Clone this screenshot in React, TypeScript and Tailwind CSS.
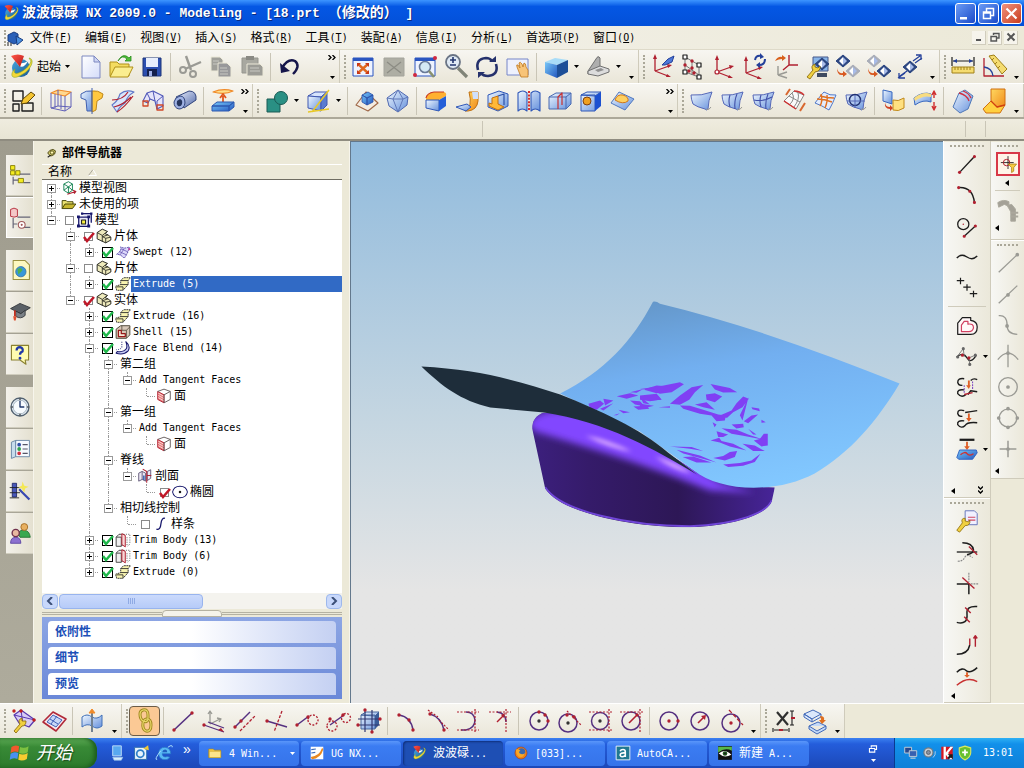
import React from "react";

type Shape = [d: string, stroke?: string, fill?: string, width?: number, dash?: string];

const c = (x: number, y: number, r: number) =>
  `M${x - r} ${y}a${r} ${r} 0 1 0 ${2 * r} 0a${r} ${r} 0 1 0 ${-2 * r} 0Z`;
const N = "none";
const K = "#1c1c1c";
const R = "#b02030";
const B = "#3b54a8";
const V = "#553080";
const G = "#9a9a94";
const W = "#ffffff";
const O = "#f08a28";
const Y = "#f0d040";

const dot = (x: number, y: number, col = R, r = 1.7): Shape => [c(x, y, r), N, col];
const axes = (x: number, y: number, col = R): Shape[] => [
  [`M${x} ${y}V${y - 13}M${x} ${y}L${x + 14} ${y - 5}M${x} ${y}L${x + 13} ${y + 5}`, col, N, 1.3],
  [`M${x - 2} ${y - 12}L${x} ${y - 17}L${x + 2} ${y - 12}ZM${x + 12} ${y - 7}L${x + 17} ${y - 6}L${x + 13} ${y - 3}ZM${x + 12} ${y + 3}L${x + 16} ${y + 6}L${x + 11} ${y + 6}Z`, N, col],
];
const diamond = (x: number, y: number, col = "#2b4580"): Shape[] => [
  [`M${x} ${y - 6}L${x + 7} ${y}L${x} ${y + 6}L${x - 7} ${y}Z`, col, col, 1],
  [`M${x - 4} ${y}L${x} ${y - 4}V${y + 4}Z`, N, W],
  [`M${x + 4} ${y}L${x} ${y - 4}V${y + 4}Z`, N, "#a9bce8"],
];
const windowFrame = (col = "#2a55c0"): Shape[] => [
  ["M4 5H24V23H4Z", col, "#eef3ff", 1],
  ["M4 5H24V8H4Z", N, col],
];
const surface = (fill = "url(#paleBlue)"): Shape[] => [
  ["M4 8Q14 9 25 5Q21 14 21 22Q20 24 18 22Q10 20 6 17Q4 12 4 8Z", "#5568b8", fill, 1],
  ["M19 22Q22 24 24 20", "#9a9a94", N, 1],
];
const roundBox = "M4 8L15 4L24 7V19L14 24L4 20Z";

const icons: Record<string, Shape[]> = {
  nx: [
    [c(14, 15, 9), N, "url(#globe)"],
    ["M9 9Q15 19 21 8Q15 12 9 9Z", N, W],
    ["M4 3Q11 0 17 3L13 14Z", N, "url(#redCone)"],
    ["M22 5C29 6 24 19 10 24C3 26 4 19 8 16C4 26 22 17 24 8Z", "#8aa820", "#f4d838", 0.6],
  ],
  newDoc: [["M6 3H18L24 9V25H6Z", "#7c88c0", "url(#paper)", 1], ["M18 3V9H24Z", "#7c88c0", "#cdd4f4", 1]],
  open: [
    ["M3 9H10L12 11H22V23H3Z", "#b09018", "#f4dc60", 1],
    ["M3 24L8 14H26L21 24Z", "#b09018", "#fbee90", 1],
    ["M11 8Q15 1 20 6L18 8H24V3L22 5Q16 -1 11 8Z", "#2a8a20", "#50c038", 0.8],
  ],
  save: [
    ["M5 5H23V23H5Z", "#1d3478", "#2c4fb0", 1],
    ["M8 5H20V14H8Z", N, "#e8eefc"],
    ["M9 16H19V23H9Z", N, "#14204c"],
    ["M11 18H14V23H11Z", N, "#9fb0e8"],
  ],
  cut: [
    ["M10 3L15 17M25 9L9 16", G, N, 2.4],
    [c(7, 17, 3), G, N, 2],
    [c(17, 21, 3), G, N, 2],
  ],
  copy: [
    ["M4 4H13L16 7V18H4Z", "#ece9d8", "#a0a09a", 1],
    ["M11 10H20L24 14V24H11Z", "#ece9d8", "#98989a", 1],
    ["M6 8H12M6 11H10M13 15H20M13 18H21M13 21H21", "#c8c8c2", N, 1],
  ],
  paste: [
    ["M4 5H20V20H4Z", "#95958e", "#a8a8a0", 1],
    ["M8 3H16V7H8Z", N, "#8a8a84"],
    ["M9 11H22L25 14V23H9Z", "#ece9d8", "#9c9c96", 1],
    ["M12 15H21M12 18H22", "#c8c8c2", N, 1],
  ],
  undo: [
    ["M6 15Q12 5 19 8Q25 13 17 21", "#16164a", N, 2.4],
    ["M4 10L5 20L14 18Z", N, "#16164a"],
  ],
  fit: [
    ...windowFrame(),
    ["M9 11L19 20M19 11L9 20", "#e06820", N, 2.4],
    ["M8 10H12L8 14ZM20 10H16L20 14ZM8 21H12L8 17ZM20 21H16L20 17Z", N, "#c83818"],
  ],
  fitGray: [["M4 5H24V23H4Z", "#a4a49c", "#aeaea4", 1], ["M7 9L21 20M21 9L7 20", "#8c8c84", N, 1.3]],
  zoomWin: [
    ...windowFrame(),
    [c(14, 14, 5.5), "#6a7a98", "#d4e8f4", 1.6],
    ["M18 18L23 24", "#889070", N, 2.6],
    dot(4, 22, "#d02840", 2),
    dot(24, 5, "#d02840", 2),
  ],
  zoom: [
    [c(11, 9, 7), "#6a7484", "#dfe9f4", 1.8],
    ["M16 15L25 24", "#808478", N, 3.2],
    ["M11 4V10M8 7H14M8 12H14", "#23366e", N, 1.6],
  ],
  rotate: [
    ["M5 17Q2 6 13 5Q17 5 19 8M23 11Q26 22 15 23Q10 23 8 20", "#25316c", N, 2.6],
    ["M16 9H23V3ZM12 19H5V25Z", N, "#25316c"],
  ],
  pan: [
    ["M3 6H24V22H3Z", "#7786c8", "#eef1fd", 1],
    ["M13 14Q12 11 14 12L16 15L15 10Q16 8 18 11L19 14L20 10Q22 10 22 14L24 17V24H17Z", "#c07820", "#f8c478", 0.8],
  ],
  cube: [
    ["M3 9L13 5L26 7L15 12Z", N, "#a8dcf8"],
    ["M3 9L15 12V25L3 20Z", N, "url(#blue)"],
    ["M15 12L26 7V19L15 25Z", N, "#1d4f98"],
  ],
  clip: [
    ["M4 18L12 6Q14 2 16 5V14L4 21Z", "#707070", "#aeaeae", 1],
    ["M4 18L16 13L25 16V19L14 23L4 21Z", "#707070", "#dcdcdc", 1],
    ["M11 17L17 15L20 17L14 19Z", N, "#909090"],
  ],
  csysPick: [...axes(7, 18), ["M14 12L20 6L26 3L24 9L17 12Z", "#24409a", "#4d78d8", 1]],
  csysGrid: [
    ["M6 4V19M6 4L20 12M6 12L20 22M6 19L20 24M13 8V22M20 12V24", "#777", N, 1],
    ["M4 2H8V6H4ZM18 10H22V14H18ZM4 17H8V21H4ZM18 22H22V26H18Z", K, W, 1.2],
    dot(6, 12), dot(13, 8), dot(13, 15), dot(15, 20), dot(10, 18),
  ],
  csys: [...axes(7, 19), [c(7, 19, 2), R, W, 1.2]],
  csysRot: [
    ...axes(5, 20),
    ["M14 7Q15 2 20 3M24 6Q24 12 18 12", "#24409a", N, 2],
    ["M19 0V6L23 4ZM19 9V15L15 12Z", N, "#24409a"],
  ],
  csysMove: [
    ["M6 22V13M6 22L15 19M6 22L15 25", G, N, 1.4],
    ["M17 12V2M17 12H26M17 12L11 17", R, N, 1.4],
    ["M3 8Q6 3 10 4V2L14 5L10 8V6Q7 6 3 8Z", N, "#d8601c"],
  ],
  csysTool: [
    ["M10 4H25V18H10Z", "#46588a", "#88b4e8", 1],
    ["M14 20H24V24H14Z", N, "#3e4a60"],
    ...diamond(19, 11),
    ["M4 24L10 17Q7 13 12 11V14L15 15L17 13Q18 18 12 19L7 26Z", "#907010", Y, 0.9],
  ],
  swapA: [...diamond(9, 8), ...diamond(19, 18, "#a9adb8"), ["M3 15Q4 21 9 20V18L13 21L9 24V22Q3 23 3 15Z", N, "#d85820"]],
  swapB: [...diamond(9, 8, "#a9adb8"), ...diamond(19, 18), ["M3 15Q4 21 9 20V18L13 21L9 24V22Q3 23 3 15Z", N, "#d85820"]],
  spread: [
    ...diamond(14, 14),
    ["M17 8L24 3M19 10L26 5M20 2H25V7M4 23L11 18M2 25L9 20M3 20V25H9", "#24409a", N, 1.3],
  ],
  measure: [
    ["M3 4V13M25 4V13M4 8H24", K, N, 1.2],
    ["M4 8L8 6V10ZM24 8L20 6V10Z", N, "#24409a"],
    ["M3 14H25V20H3Z", "#a08018", "#f5dc70", 1],
    ["M6 14V17M9 14V17M12 14V17M15 14V17M18 14V17M21 14V17", "#a08018", N, 1],
  ],
  angle: [
    ["M4 5V23H24", R, N, 1.3],
    ["M4 14Q12 15 13 23", "#24409a", N, 1.3],
    ["M9 3L14 2L27 16L22 21Z", "#a08018", "#f5dc70", 1],
    ["M12 7L14 5M15 11L17 9M18 15L20 13", "#a08018", N, 1],
  ],
  sketch: [
    ["M4 4H14V14H4ZM4 17H10V24H4ZM13 16H24V24H13Z", K, N, 1.4],
    ["M12 17L14 12L22 5L26 8L18 16Z", "#604808", "#f4c430", 1],
  ],
  extrude: [
    ["M4 6L11 3L24 5L18 9Z", O, "#ffd890", 1.2],
    ["M4 6V21L18 24V9M18 24L24 20V5M11 3V19L4 21M11 19L24 20M8 7V21M14 8V22", "#6060b8", N, 1],
  ],
  revolve: [
    ["M3 7Q8 3 14 4V24H9L8 13L3 11Z", "#4060b0", "url(#paleBlue)", 1],
    ["M14 4Q20 3 25 7L24 11L19 14L18 23L14 25Z", "#c08818", "#ffc840", 1],
    ["M14 1V27", "#4060b0", N, 1],
  ],
  sweep: [
    ["M3 18Q9 14 11 7Q17 2 25 5Q18 9 16 16Q10 20 8 25Z", "#6078c8", "#d8e6fb", 1.1],
    ["M3 13Q14 13 19 5M8 25Q16 20 24 9M5 20Q14 18 22 10", R, N, 1.2],
  ],
  bent: [
    ["M3 14L7 6L13 4L23 9V19L17 22L15 14L10 12L8 16Z", "#5058b8", "#e6e4fa", 1.1],
    ["M7 6L10 12M13 4L15 14M23 9L17 14V22", "#5058b8", N, 1],
    ["M3 14H8V19H3ZM17 18H23V23H17Z", "#d04828", N, 1.3],
  ],
  tube: [
    ["M5 10L18 4Q26 4 25 13L13 21Z", "#31447c", "url(#steel)", 1],
    ["M9 9Q14 9 14 16Q13 22 8 22Q3 21 3 15Q4 10 9 9Z", "#31447c", "#9fb2e4", 1],
    ["M9 12Q12 13 11 17Q10 20 7 19Q5 17 6 14Z", N, "#26365f"],
  ],
  emboss: [
    ["M4 5Q14 1 24 4Q16 8 4 5Z", O, "#ffe08a", 1.2],
    ["M14 16V9M11 11L14 7L17 11", "#e05820", N, 1.8],
    ["M3 19L8 15H25L20 19ZM3 19H20V24H3ZM20 19L25 15V20L20 24Z", "#2c58b0", "url(#blue)", 1],
  ],
  unite: [["M5 12H18V25H5Z", "#1a5a54", "#2a9084", 1], [c(19, 11, 6.5), "#1a5a54", "#2a9084", 1]],
  cubeLines: [
    ["M4 9L11 5H23L17 10Z", "#4058b0", "#d6e4fc", 1],
    ["M4 9L17 10V24L4 21Z", "#4058b0", "url(#paleBlue)", 1],
    ["M17 10L23 5V18L17 24Z", "#4058b0", "#5a7cd0", 1],
    ["M25 3L8 25M4 25L25 22", "#e8c828", N, 1.5],
  ],
  pyramid: [
    ["M3 18L13 5L25 16L15 24Z", "#a06848", "#f4ece0", 1.2],
    ["M9 8L15 5L20 8L14 11ZM9 8V15L14 18V11ZM14 11L20 8V15L14 18Z", "#2c50a8", "url(#blue)", 0.8],
  ],
  poly: [
    ["M14 3L24 10L23 18L14 25L5 19L3 11Z", "#5068b0", "url(#paleBlue)", 1],
    ["M14 3L9 12L14 25M14 3L19 12L14 25M3 11L9 12H19L24 10", "#6078b8", N, 1],
  ],
  blend: [
    ["M4 11Q5 6 12 5H21Q25 5 24 9L17 13H4Z", N, "#ffb030"],
    ["M4 13H17V24L4 21Z", "#3058b8", "url(#paleBlue)", 1],
    ["M17 13L24 9V19L17 24Z", N, "#2560d8"],
    ["M4 11Q5 6 12 5H22", "#c83820", N, 1.2],
  ],
  faceBlend: [
    ["M16 5H25V14Q24 23 15 24H12Q20 20 16 5Z", "#c07010", "url(#orange)", 1],
    ["M3 20L14 17L18 20L13 24Z", "#3058b8", "url(#paleBlue)", 1],
    ["M19 5H25V12H20Z", N, "#cfe0fc"],
  ],
  shell: [
    [roundBox, "#3058b8", "url(#paleBlue)", 1],
    ["M8 11L14 9V17L20 20L14 23L5 19V16L8 17Z", "#c07010", "#ffb838", 1],
    ["M14 9L20 7V18", "#2c50a8", N, 1.2],
  ],
  thread: [
    ["M3 6Q8 2 12 6V24Q7 20 3 24ZM16 6Q20 2 25 6V24Q20 20 16 24Z", "#3058b8", "url(#paleBlue)", 1.1],
    ["M14 4V24", "#d83030", N, 2, "2 1.4"],
  ],
  split: [
    ["M3 10L10 6H25V17L20 22H3Z", "#4868b0", "url(#paleBlue)", 1],
    ["M3 10H20L25 6M20 10V22", "#4868b0", N, 1],
    ["M12 22V10L16 6V18", "#c83030", N, 1.2],
  ],
  hole: [
    ["M4 8L10 5H24L18 9ZM4 8H18V24H4Z", "#3058b8", "url(#paleBlue)", 1],
    ["M18 9L24 5V19L18 24Z", N, "#1c50d0"],
    [c(10, 14, 4), "#804010", "#f0a020", 1],
  ],
  pad: [
    ["M3 16L11 5L26 12L17 23Z", "#5078c0", "url(#paleBlue)", 1],
    ["M7 13Q9 7 15 8Q21 10 20 14Q15 18 7 13Z", "#d07818", "#ffd060", 1],
  ],
  surf0: surface(),
  surf1: [...surface(), ["M12 8Q10 14 12 20M19 7Q16 14 17 22", "#4050a8", N, 1.1]],
  surf2: [...surface(), ["M12 8Q10 14 12 20M19 7Q16 14 17 22M5 13Q14 15 23 10", "#4050a8", N, 1.1]],
  surfCurves: [
    ["M4 14L14 4L24 8L16 22Z", "#888", "#fafafa", 1],
    ["M9 9L20 15M12 6Q16 12 9 18M18 6Q20 12 14 20", "#888", N, 1],
    ["M4 14Q10 18 16 22M14 4Q20 4 24 8", "#d03030", N, 1.5],
    ["M6 8L10 2M20 24L25 16", "#d86830", N, 2],
  ],
  surfGrid: [
    ["M4 16Q10 8 13 5Q19 9 25 8Q22 16 18 23Q10 18 4 16Z", "#5078c8", "#e4ecfc", 1],
    ["M6 12Q14 12 21 15M9 9Q16 11 23 11M10 7Q12 14 9 19M16 8Q17 14 14 21", "#e07020", N, 1.4],
  ],
  surfTrim: [...surface(), [c(13, 13, 5.5), "#203070", N, 1.4], ["M5 14H23M13 8V21", "#5568b8", N, 1]],
  extend: [
    ["M3 3L12 5V17L3 14Z", "#3868c0", "url(#paleBlue)", 1],
    ["M13 13Q18 15 24 11V21Q18 25 13 23Z", "#c08818", "#ffe080", 1],
    ["M5 15Q5 20 10 20V18L13 21L10 24V22Q4 22 5 15Z", N, "#d04020"],
  ],
  offsetSurf: [
    ["M3 11Q12 4 20 7V15Q12 12 4 18Z", "#3868c0", "url(#paleBlue)", 1],
    ["M3 11Q12 4 20 7V10Q12 8 4 14Z", N, "#f8dc80"],
    ["M23 5V11M21 8L23 4L25 8M23 15V22M21 19L23 23L25 19", "#d03030", N, 1.4],
  ],
  thicken: [
    ["M4 20L10 6L16 3L24 9L19 22L11 26Z", "#5078b8", "url(#paleBlue)", 1],
    ["M10 6Q18 8 20 14M14 4Q20 6 22 11", "#d03040", N, 1.3],
  ],
  corner: [
    ["M11 2H25V18L17 22L11 14Z", "#d07010", "url(#orange)", 1],
    ["M3 22L11 14L17 20L25 18L20 26H6Z", "#d07010", "#ffd040", 1],
    ["M11 14L17 20L25 18", "#d04010", N, 1.3],
  ],
  // curve toolbar
  netTool: [
    ["M5 8L12 3L26 13L20 20L10 16Z", "#5838b0", "#d8ccf4", 1.2],
    ["M12 3L14 18M5 8L26 13", "#5838b0", N, 1],
    dot(5, 4, "#c02020"), dot(25, 13, "#c02020"), dot(12, 4, "#c02020"),
    ["M5 24L11 17Q8 13 13 11V14L17 14Q17 19 13 19L7 26Z", "#907010", Y, 0.9],
  ],
  netSurf: [
    ["M3 15L13 5L26 12L16 24Z", "#b02838", "#f8e8ec", 1.6],
    ["M7 15L13 8L22 13L16 20Z", "#4060b8", "#c8d8f8", 1],
    ["M10 12L18 17M17 9L11 17", "#4060b8", N, 1],
  ],
  sheetAxis: [
    ["M4 10Q9 6 14 10Q19 13 24 8V19Q19 23 14 19Q9 16 4 20Z", "#4070b8", "url(#paleBlue)", 1],
    ["M14 5V25", "#708090", N, 2],
    ["M11 6L14 2L17 6Z", O, O, 1],
  ],
  chain: [
    ["M12 3Q17 2 17 8V12Q16 16 12 14Q9 12 9 7Q9 4 12 3Z", "#a08820", N, 3],
    ["M16 12Q20 12 20 18Q20 25 15 24Q11 22 12 16Q13 12 16 12Z", "#a08820", N, 3],
    ["M12 3Q17 2 17 8V12Q16 16 12 14Q9 12 9 7Q9 4 12 3ZM16 12Q20 12 20 18Q20 25 15 24Q11 22 12 16Q13 12 16 12Z", "#e8d868", N, 1.2],
  ],
  line: [["M5 23L23 6", V, N, 1.6], dot(5, 23), dot(23, 6)],
  lineAxes: [
    ["M10 17V5M10 17L20 12M8 7L10 4L12 7M17 11L21 12L19 15", G, N, 1.3],
    ["M4 18L24 25M8 15L24 21", V, N, 1.3],
    dot(4, 18), ["M18 23L24 25L21 21Z", N, R],
  ],
  parallel: [["M4 20L19 5", V, N, 1.5], ["M9 24L24 9", R, N, 1.3, "3 1.5"], dot(4, 20), dot(10, 14)],
  cross: [["M5 14L25 20", V, N, 1.4], ["M20 4L12 25", R, N, 1.3, "3 1.5"], dot(5, 14)],
  tangent: [["M4 18L16 9", V, N, 1.5], [c(20, 13, 5), R, N, 1.3, "2 1.5"], dot(4, 18), dot(15, 10)],
  tangent2: [["M6 18L20 8", V, N, 1.5], [c(8, 19, 5), R, N, 1.3, "2 1.5"], [c(22, 11, 4.5), R, N, 1.3, "2 1.5"], dot(6, 12), dot(19, 8)],
  frame: [
    ["M6 8L11 5H24L20 9ZM6 8H20V22H6Z", "#4868a0", "url(#paleBlue)", 1],
    ["M20 9L24 5V18L20 22Z", N, "#3a5c98"],
    ["M10 3V25M17 3V25M3 12H25M3 18H25", "#303870", N, 1.2],
    dot(3, 18), dot(25, 12), dot(10, 3), dot(17, 25),
  ],
  arc3: [["M6 8Q18 10 20 23", V, N, 1.5], dot(6, 8), dot(16, 13), dot(20, 23)],
  arcTan: [["M6 7Q17 10 20 23", V, N, 1.5], ["M4 3L14 10M15 13L25 23", R, N, 1.2, "2 1.5"], dot(6, 7), dot(20, 23)],
  arcLines: [["M6 23H11Q20 21 20 13Q19 5 11 5", V, N, 1.5], ["M2 5H24M2 23H24M20 2V26", R, N, 1.2, "2 1.5"]],
  arcRad: [["M11 5Q20 6 20 15", V, N, 1.5], ["M3 5H25M20 2V26", R, N, 1.2, "2 1.5"], ["M11 15L18 8", R, N, 1.5], ["M15 8L19 6L18 11Z", N, R]],
  circ3: [[c(15, 14, 9), V, N, 1.5], dot(15, 14, "#333"), dot(15, 5), dot(21, 8), dot(24, 14)],
  circTan: [[c(13, 16, 9), V, N, 1.5], dot(13, 16, "#333"), dot(12, 8), dot(19, 10), ["M12 4L26 18", R, N, 1.2, "2 1.5"]],
  circLines: [[c(14, 14, 8.5), V, N, 1.5], dot(14, 14, "#333"), ["M3 5H26M3 23H26M23 2V26", R, N, 1.2, "2 1.5"]],
  circRad: [[c(14, 14, 9), V, N, 1.5], ["M3 5H26M23 2V26", R, N, 1.2, "2 1.5"], ["M12 16L19 9", R, N, 1.6], dot(20, 8)],
  circCenter: [[c(14, 14, 9), V, N, 1.5], dot(14, 14), dot(23, 14)],
  circArrow: [[c(14, 14, 9), V, N, 1.5], ["M12 16L18 10", R, N, 1.6], ["M15 9L20 8L19 13Z", N, R]],
  circTanC: [[c(14, 16, 9), V, N, 1.5], dot(14, 16), ["M12 3L26 18", R, N, 1.3, "4 2"]],
  dimension: [
    ["M7 5L18 18M18 5L7 18", "#303030", N, 2.2],
    ["M22 4V18M20 4H24M20 18H24M3 21V25M19 21V25M4 23H18", K, N, 1.1],
    ["M9 23H13M21 11H25", R, N, 1.8],
  ],
  blocks: [
    ["M3 7L12 3L20 7L11 12ZM3 7V10L11 15V12ZM11 15L20 10V7", "#4068b8", "#dbe8fb", 1],
    ["M8 19L17 15L25 19L16 24ZM8 19V22L16 27L25 22V19", "#4068b8", "#c4daf8", 1],
    ["M19 9Q24 9 23 13H25L21 17L18 13H20Q20 11 19 9Z", N, "#e07020"],
  ],
  // vertical toolbars
  vLine: [["M6 23L22 6", K, N, 1.5], dot(6, 23), dot(22, 6)],
  vArc: [["M5 6Q20 5 22 22", K, N, 1.5], dot(5, 6), dot(17, 10), dot(22, 22)],
  vCircLine: [[c(10, 12, 6), K, N, 1.4], dot(10, 12, R, 0.8), ["M11 25L23 14", K, N, 1.4], dot(11, 25), dot(23, 14)],
  vWave: [["M3 15Q8 10 14 14Q20 18 25 13", K, N, 1.6]],
  vPoints: [["M7 3V10M3 6H11M14 10V17M10 13H18M21 17V24M17 20H25", K, N, 1.3]],
  vOffset: [
    ["M4 23V11L9 5H18V8Q25 9 25 15Q25 23 18 23Z", K, "#fff8f8", 1.3],
    ["M8 20V13L11 9H15V12Q21 11 21 16Q20 20 16 20Z", "#d04060", N, 1.3],
  ],
  vPoly: [["M3 14Q10 8 14 15T24 12", K, N, 1.4], ["M3 14L10 5L11 14M17 22L16 15L23 12", "#777", N, 1], dot(10, 5, "#666"), dot(4, 14, "#666"), dot(23, 12, "#666"), dot(17, 22, "#666"), dot(9, 12), dot(16, 15)],
  vBridge: [
    ["M11 4Q4 3 4 8Q5 12 9 11M11 16Q3 15 4 20Q8 25 13 21M18 6Q21 3 25 5M15 21L18 17L25 18", K, N, 1.5],
    ["M11 11V20M20 7V16", "#8050c0", N, 1.2, "2 1"],
    ["M15 6V11H13L16 15L18 11H17V6Z", N, "#e06028"],
    ["M11 21L20 19", R, N, 1.5],
  ],
  vProject: [
    ["M11 5Q4 3 4 8Q5 12 9 11M12 7L18 6L25 5M11 16Q3 15 4 20Q8 25 12 21Q14 17 25 18", K, N, 1.5],
    ["M15 8V13H13L16 17L19 13H17V8Z", N, "#e06028"],
  ],
  vSheet: [
    ["M6 3H22", K, N, 2.4],
    ["M13 5V10H11L14 14L17 10H15V5Z", N, "#e06028"],
    ["M3 22L6 14H24L25 17L20 24H5Z", "#3060c0", "url(#blue)", 1],
    ["M7 19Q12 15 14 18T21 18", "#d03030", N, 1.4],
  ],
  vEdit: [
    ["M12 3H22L25 6V18H12Z", "#6070b8", "#f0f0ff", 1],
    ["M15 10H23M15 13H23", "#d04860", N, 1.2],
    ["M3 24L9 16Q7 11 12 11V14L16 15L17 13Q18 19 12 19L6 26Z", "#907010", Y, 0.9],
  ],
  vTrim: [["M9 4Q20 4 21 12Q21 15 14 17", K, N, 1.6], ["M3 14H25", K, N, 1.4], ["M4 24Q10 24 12 19Q15 16 20 20", "#888", N, 1.2, "2 1"], ["M16 8L25 17", R, N, 1.4]],
  vCorner: [["M3 15H16V26", K, N, 1.6], ["M16 3V13M18 15H26", "#888", N, 1.2, "2 1"], ["M9 8L22 20", R, N, 1.4]],
  vDivide: [["M3 23Q15 26 14 14Q13 5 25 6", K, N, 1.6], ["M12 7L18 13M11 17L17 23", R, N, 1.5]],
  vLength: [["M3 24Q15 24 17 14", K, N, 1.6], ["M17 14V7M23 5V16M21 7L23 4L25 7", R, N, 1.5]],
  vSmooth: [["M3 10Q9 4 13 8T25 5", K, N, 1.6], ["M13 10V13H11L14 16L17 13H15V10Z", N, "#e06028"], ["M3 24Q14 14 25 20", "#c83030", N, 1.6]],
  filter: [
    ["M14 3V21M4 12H22", K, N, 1.2],
    [c(12, 12, 4.5), R, N, 1.4],
    ["M14 14H26L22 19V24L19 26V19Z", "#a07810", "#f8cc40", 1],
  ],
  gear: [["M3 6Q9 2 15 5V10L10 8L4 11ZM13 9L18 8L22 13V26H17V16Z", "#aaa79c", "#a4a197", 1], ["M17 17H25M17 21H25", "#aaa79c", N, 2]],
  gLine: [["M4 24L24 5", G, N, 1.4], dot(24, 5, G, 2)],
  gMid: [["M4 24L24 5", G, N, 1.4], dot(14, 15, G, 2)],
  gSpline: [["M4 4Q13 3 13 14Q13 24 24 24", G, N, 1.4], dot(13, 15, G, 2)],
  gInter: [["M3 18Q14 4 25 18M14 2V26", G, N, 1.4], dot(14, 11, G, 2)],
  gCenter: [[c(14, 14, 10), G, N, 1.4], dot(14, 14, G, 2)],
  gQuad: [[c(14, 14, 9.5), G, N, 1.4], dot(14, 4, G, 2), dot(14, 24, G, 2), dot(4, 14, G, 2), dot(24, 14, G, 2)],
  gPlus: [["M14 5V23M5 14H23", G, N, 1.6], dot(14, 14, G, 2)],
  // resource bar
  assembly: [["M3 3H8V8H3ZM3 9H8V14H3ZM9 9H14V14H9ZM12 18H18V23H12Z", "#807800", "#f4ec20", 1], ["M14 13H26M6 16V25M6 20H12M18 23H26", "#667", N, 1.4]],
  part: [["M3 4Q7 1 11 4V12Q7 14 3 12Z", R, "#f4c8c8", 1], ["M11 13H26M6 14V26M6 21H11M18 25H26", "#667", N, 1.4], [c(16, 22, 4), "#a05858", W, 1.2], dot(16, 22, "#a05858", 1.2)],
  web: [["M6 3H20L25 8V25H6Z", "#9a9040", "#fdf8c0", 1.2], [c(15, 16, 6), "#3870a8", "#3898d8", 1], ["M11 13Q15 10 17 14Q14 18 12 19Z", N, "#50b050"]],
  cap: [["M3 10L14 4L26 9L15 16Z", "#303438", "#5a6066", 1], ["M9 13V19Q15 23 20 18V12L15 16Z", "#303438", "#7a8086", 1], ["M8 12V19", "#c83020", N, 2], ["M6 19H10L9 24H7Z", N, "#e05030"]],
  help: [["M4 4H24V21H20L21 26L14 21H4Z", "#8a8030", "#fffcb0", 1.3], ["M10 10Q10 6 14 6Q18 7 17 11Q14 12 14 15", "#2038a8", N, 2.6], dot(14, 19, "#2038a8")],
  clock: [[c(14, 14, 10.5), "#506070", "#dfe8f0", 1.6], [c(14, 14, 8), "#a0b0bc", "#f7fbfe", 1], ["M14 7V14H19", "#20386c", N, 1.6], ["M14 4V6M14 22V24M4 14H6M22 14H24", K, N, 1.2]],
  palette: [["M4 6L9 4V23L4 25Z", "#6080a0", "#c8dcec", 1], ["M9 4H25V23H9Z", "#6080a0", "#f6faff", 1], dot(13, 9, "#3050a8", 2.2), dot(13, 14, "#30a050", 2.2), dot(13, 19, "#d03040", 2.2), ["M17 9H23M17 14H23M17 19H23", "#556", N, 1.4]],
  wizard: [["M5 5H10V21H5Z", "#202868", "#4858b8", 1], ["M2 10H15M2 16H14M2 22H13", K, N, 1], ["M13 12L25 24", "#3848b0", N, 2.6], ["M17 3L19 8L24 9L20 11L19 16L16 11L12 10L16 8Z", N, "#f4e858"]],
  users: [["M12 15Q13 10 19 11Q25 11 26 19H14Z", "#207030", "#38a850", 1], [c(19, 7, 4), "#a06820", "#e8b060", 1], ["M3 26Q3 19 9 19Q15 19 15 26Z", "#5840a0", "#8c70d0", 1], [c(9, 14, 4.2), "#70304c", "#e8b8a0", 1.6]],
  // task bar
  flag: [["M4 7Q8 4 13 6L12 13Q7 11 3 14Z", N, "#f0582c"], ["M14 7Q19 9 24 6L23 13Q18 16 13 14Z", N, "#7cc040"], ["M3 15Q7 12 12 14L11 21Q6 19 2 22Z", N, "#4a90f0"], ["M13 15Q18 17 23 14L22 21Q17 24 12 22Z", N, "#f8cc30"]],
  qDesk: [["M8 4H20V18H8Z", "#b8d8f8", "#58a8f0", 1.4], ["M8 20H22L20 24H10Z", "#9ac4e8", "#d8ecfc", 1]],
  qMail: [["M5 6H18L22 10V23H5Z", "#3070b0", "#e8f4fc", 1.4], [c(13, 15, 5), "#3080c8", N, 2.4], ["M17 8L24 3L25 10Z", N, "#f0c838"]],
  qIe: [["M5 14Q6 6 14 6Q22 7 22 15H10Q11 21 17 19L21 20Q17 25 11 23Q5 21 5 14Z", "#2878c8", "#58b8f4", 1], ["M10 13H17Q17 9 14 9Q11 9 10 13Z", N, "#2060c0"], ["M3 23Q-2 24 8 11M18 6Q25 1 24 6", "#a8dcfc", N, 1.4]],
  folder: [["M3 7H11L13 9H24V22H3Z", "#a88010", "#f4c848", 1], ["M4 11H24V22H4Z", "#c8a020", "#fce48c", 1]],
  ug: [["M3 3H25V25H3Z", N, W], ["M3 21Q18 20 23 5L25 8Q20 24 5 25Z", N, "#e88820"], ["M4 8L12 7M4 14L11 13", "#3868b8", N, 2]],
  firefox: [[c(14, 14, 10.5), "#a03808", "#f08018", 1], [c(15, 12, 6.5), N, "#3868b0"], ["M5 8Q10 6 13 10Q9 12 12 15Q17 18 21 14Q18 23 11 21Q5 18 5 8Z", N, "#f8a828"]],
  acad: [["M2 2H26V26H2Z", W, "#207890", 1.5], ["M9 11Q10 8 14 8Q18 8 18 12V21M18 14Q9 13 9 18Q11 23 18 18", W, N, 2.8]],
  eye: [["M2 2H26V26H2Z", N, "#101010"], ["M2 3H26V10Q14 4 2 13Z", N, "#58b848"], ["M3 15Q13 5 25 17Q13 24 3 15Z", N, W], [c(14, 15, 4), N, "#205820"], dot(14, 15, K)],
  net: [["M3 4H15V14H3Z", "#c8d0d8", "#28488c", 1.6], ["M11 10H24V20H11Z", "#c8d0d8", "#3860b0", 1.6], ["M13 23H22", "#c8d0d8", N, 2]],
  volume: [[c(13, 13, 8), "#707880", "#c8ccd0", 2], [c(13, 13, 3.5), "#505860", "#8890a0", 1.4], ["M21 22Q26 18 25 11", "#b8d0e8", N, 1.6]],
  kav: [["M4 3H24V25H4Z", N, "#d81820"], ["M8 3H12V13L20 3H25L16 14L24 25H18L12 17V25H8Z", N, W], ["M15 16H24V25L21 22L17 25L15 22L18 19Z", N, K]],
  shield: [["M14 2L24 5V14Q23 22 14 26Q5 22 4 14V5Z", "#d8e860", "#68c030", 2], ["M14 8V19M9 13H19", W, N, 3]],
  // tree
  tViews: [["M5 7L13 3L20 7V18L13 23L5 18ZM5 7L13 12L20 7M13 12V23M5 18L13 12M20 18L13 12", "#108050", N, 1.6], ["M11 25L26 20M21 18L26 20L23 24", R, N, 2]],
  tFolder: [["M2 22V8H9L11 10H21V14", "#404000", "#e8e070", 1.6], ["M2 22L7 14H26L20 22Z", "#404000", "#c8b830", 1.6]],
  tModel: [["M3 9H20V25H3ZM9 3H25V19", "#18186c", "#e8e8f8", 2.2], ["M8 14H15V21H8Z", K, "#f8f040", 1.8], ["M0 6H5V11H0ZM18 6H23V11H18ZM0 22H5V27H0ZM18 22H23V27H18ZM7 1H11V5H7ZM23 1H27V5H23Z", N, "#18186c"]],
  tBody: [["M2 8L11 2L20 6L16 10L21 12L26 16V21L17 26L2 19Z", "#282820", "#eeeabc", 1.7], ["M2 8L11 13V24M11 13L20 6M12 15L21 12M17 26V18L26 16M17 18L11 15", "#282820", N, 1.5]],
  tSwept: [["M3 18Q12 12 10 5Q16 9 25 5Q23 16 16 25Q10 18 3 18Z", "#4838a0", "#dcd8fa", 1.6, "3 1.5"], ["M7 13L20 19M10 8L23 14M16 8L9 19", "#6050b0", N, 1.3], dot(25, 9, "#c040a0", 2)],
  tExtrude: [["M10 8L15 3H27L23 8V15L14 25H3L1 18L10 15Z", "#282828", "#f8f4b0", 1.6, "3 1"], ["M10 8H23M10 15H23M3 19H14V25", "#282828", N, 1.5]],
  tShell: [["M2 9L10 3H26V19L20 25H2Z", "#504838", "#d8c8b8", 1.7], ["M6 11H11V17H18V22H6Z", "#981818", "#f8e8d8", 2.2], ["M12 3V11H20V25M20 11L26 5", "#504838", N, 1.4]],
  tBlend: [["M19 3Q22 10 20 15Q15 22 4 20L2 23Q15 27 23 19Q28 11 19 3Z", "#18186c", "#c8ccf4", 1.8], ["M12 3V13Q9 17 2 17", "#18186c", N, 1.5, "2 2"]],
  tFace: [["M3 6L14 12V26L3 20Z", R, "#e87878", 1.6], ["M3 6L14 2L25 6V20L14 26V12L25 6", "#605858", N, 1.6], ["M4 9L13 14M4 13L13 18M4 17L13 22", W, N, 1.2]],
  tSection: [["M3 9L9 6V20L3 23ZM9 6L15 9V23L9 20M18 6L24 3V18L18 22Z", "#605878", "#ece8f4", 1.6], ["M10 2L17 6V26M17 13H25", R, N, 1.8], ["M12 13V21", "#2858b0", N, 2.5]],
  tEllipse: [["M1 14Q3 4 14 4Q25 4 27 14Q25 24 14 24Q3 24 1 14Z", "#18186c", N, 1.8], dot(14, 14, K, 2.2)],
  tSpline: [["M21 4Q15 3 14 13Q13 25 6 23", "#18186c", N, 2.2]],
  tTrim: [["M2 9L7 4H16V20L11 25H2ZM2 9H11V25", "#404040", "#f0f0f0", 1.6], ["M12 3L18 6V26L12 22Z", R, "#f8d8d8", 1.7], ["M19 4H26V21L22 25M21 9V25", "#606060", N, 1.5, "2 2"]],
  pin: [["M4 14L9 8Q17 3 22 9Q22 18 15 20L10 21Z", "#383400", "#d8d070", 2], ["M4 24L11 19", K, N, 2.5], [c(14, 13, 4), "#383400", "#fff8b0", 1.8]],
};

function Icon({ name, className = "size-7" }: { name: string; className?: string }) {
  return (
    <svg viewBox="0 0 28 28" className={`${className} block shrink-0`} aria-hidden="true">
      {icons[name].map(([d, stroke = N, fill = N, width = 1, dash], i) => (
        <path key={i} d={d} stroke={stroke} fill={fill} strokeWidth={width} strokeDasharray={dash} strokeLinejoin="round" />
      ))}
    </svg>
  );
}

const latin = "font-['DejaVu_Sans_Mono','Liberation_Mono',monospace] text-[10px]";

function Mixed({ text }: { text: string }) {
  return (
    <>
      {(text.match(/[\x00-\x7f]+|[^\x00-\x7f]+/g) ?? []).map((part, i) =>
        part.charCodeAt(0) < 128 ? (
          <span key={i} className={`${latin} whitespace-pre`}>{part}</span>
        ) : (
          <span key={i}>{part}</span>
        ),
      )}
    </>
  );
}

function Down() {
  return <svg viewBox="0 0 5 3" className="h-[3px] w-[5px]" aria-hidden="true"><path d="M0 0H5L2.5 3Z" fill="#000" /></svg>;
}
function Left() {
  return <svg viewBox="0 0 4 6" className="h-[6px] w-[4px]" aria-hidden="true"><path d="M4 0V6L0 3Z" fill="#000" /></svg>;
}
function Handle() {
  return <span className="mr-px ml-1 h-6 w-[2px] shrink-0 border-l-2 border-dotted border-[#aaa798]" />;
}
function Sep() {
  return <span className="mx-[3px] h-7 w-px shrink-0 bg-[#c9c5b6]" />;
}
function Drop() {
  return (
    <button type="button" aria-label="More" className="flex h-7 w-[11px] shrink-0 items-center justify-center"><Down /></button>
  );
}
function Options({ more = false }: { more?: boolean }) {
  return (
    <button type="button" aria-label="Toolbar options" className="flex h-8 w-3.5 shrink-0 flex-col items-center justify-between py-1">
      {more ? (
        <svg viewBox="0 0 8 5" className="h-[5px] w-2" aria-hidden="true">
          <path d="M0.500 0L3 2.500L.5 5M4.500 0L7 2.500L4.500 5" stroke="#000" fill="none" strokeWidth="1.300" />
        </svg>
      ) : (
        <span />
      )}
      <Down />
    </button>
  );
}
function Tool({ name }: { name: string }) {
  const active = name === "chain";
  return (
    <button
      type="button"
      aria-label={name}
      aria-pressed={active}
      className={`flex h-[30px] w-[31px] shrink-0 items-center justify-center rounded-sm ${active ? "border border-[#6b5c48] bg-[#fbc995]" : ""}`}
    >
      <Icon name={name} />
    </button>
  );
}

function Group({ items, grow = false, more = false, start = false }: { items: string; grow?: boolean; more?: boolean; start?: boolean }) {
  return (
    <div role="toolbar" className={`flex h-full items-center border-r border-[#cfcbbb] bg-linear-to-b from-[#f7f6f1] to-[#eae6d8] ${grow ? "flex-1" : "shrink-0"}`}>
      <Handle />
      {start && (
        <button type="button" className="flex h-[30px] w-[67px] shrink-0 items-center gap-0.5 text-xs">
          <Icon name="nx" />
          <span className="flex items-center gap-1">起始<Down /></span>
        </button>
      )}
      {items.split(" ").map((n, i) => (n === "|" ? <Sep key={i} /> : n === "v" ? <Drop key={i} /> : <Tool key={i} name={n} />))}
      {grow && <span className="flex-1" />}
      <Options more={more} />
    </div>
  );
}

function TitleBar() {
  const btn = "flex size-[21px] items-center justify-center rounded-[3px] border border-white";
  return (
    <header className="flex h-[26px] shrink-0 items-center bg-linear-to-b from-[#3d95ff] via-[#0457e4] via-25% to-[#0350d8] px-0.5 text-white">
      <Icon name="nx" className="size-[18px]" />
      <h1 className="ml-0.5 flex-1 truncate font-['Liberation_Mono','Noto_Sans_CJK_SC',monospace] text-[13px] font-bold whitespace-pre [text-shadow:1px_1px_0_#0a2a80]">
        <span className="text-sm">波波碌碌</span> NX 2009.0 - Modeling - [18.prt <span className="text-sm">（修改的）</span> ]
      </h1>
      <div className="flex gap-0.5">
        <button type="button" aria-label="Minimize" className={`${btn} bg-linear-to-br from-[#6c9bf4] to-[#1b48c8]`}>
          <svg viewBox="0 0 19 19" className="size-[19px]"><path d="M4 13H11V15.500H4Z" fill="#fff" /></svg>
        </button>
        <button type="button" aria-label="Restore" className={`${btn} bg-linear-to-br from-[#6c9bf4] to-[#1b48c8]`}>
          <svg viewBox="0 0 19 19" className="size-[19px]"><path d="M7.500 8V4.500H14.500V11.500H12M4.500 8H11.500V14.500H4.500Z M4 9H12" stroke="#fff" fill="none" strokeWidth="1.500" /></svg>
        </button>
        <button type="button" aria-label="Close" className={`${btn} bg-linear-to-br from-[#f0917c] to-[#c83a18]`}>
          <svg viewBox="0 0 19 19" className="size-[19px]"><path d="M4.500 4.500L14.500 14.500M14.500 4.500L4.500 14.500" stroke="#fff" strokeWidth="2.200" /></svg>
        </button>
      </div>
    </header>
  );
}

const menus: [string, string][] = [
  ["文件", "F"], ["编辑", "E"], ["视图", "V"], ["插入", "S"], ["格式", "R"], ["工具", "T"],
  ["装配", "A"], ["信息", "I"], ["分析", "L"], ["首选项", "P"], ["窗口", "O"],
];

function MenuBar() {
  const btn = "flex h-3.5 w-3.5 items-center justify-center border-r border-b border-[#d0ccbc] bg-[#f6f4ec]";
  return (
    <nav className="flex h-6 shrink-0 items-center border-b border-[#dedac9] bg-linear-to-r from-[#f6f5f1] to-[#ece9d8] pr-1.5">
      <span className="ml-1 h-4 w-[2px] border-l-2 border-dotted border-[#aaa798]" />
      <svg viewBox="0 0 18 18" className="size-[18px]" aria-hidden="true">
        <path d="M2 6L8 3L12 5V13L8 15L2 12Z" fill="#2a60b8" stroke="#183c80" />
        <path d="M10 7L17 11L11 16Z" fill="#4a90e0" stroke="#183c80" />
        <path d="M2 13V17M5 14V17" stroke="#222" />
      </svg>
      <div className="ml-1.5 flex flex-1 gap-[13px] text-xs">
        {menus.map(([label, key]) => (
          <button key={label} type="button" className="flex shrink-0 items-center whitespace-nowrap">
            {label}
            <span className={latin}>(<u>{key}</u>)</span>
          </button>
        ))}
      </div>
      <div className="flex gap-0.5">
        <button type="button" aria-label="Minimize document" className={btn}><svg viewBox="0 0 10 10" className="size-2.5"><path d="M2 8H7" stroke="#555" strokeWidth="2" /></svg></button>
        <button type="button" aria-label="Restore document" className={btn}><svg viewBox="0 0 10 10" className="size-2.5"><path d="M3.500 3V1.500H9V6H7M1 4.500H6.500V9H1Z" stroke="#555" fill="none" strokeWidth="1.400" /></svg></button>
        <button type="button" aria-label="Close document" className={btn}><svg viewBox="0 0 10 10" className="size-2.5"><path d="M1.500 1.500L8.500 8.500M8.500 1.500L1.500 8.500" stroke="#555" strokeWidth="2" /></svg></button>
      </div>
    </nav>
  );
}

type Row = { level: number; toggle?: "+" | "-"; check?: "none" | "green" | "red"; icon?: string; label: string; selected?: boolean };
const rows: Row[] = [
  { level: 0, toggle: "+", icon: "tViews", label: "模型视图" },
  { level: 0, toggle: "+", icon: "tFolder", label: "未使用的项" },
  { level: 0, toggle: "-", check: "none", icon: "tModel", label: "模型" },
  { level: 1, toggle: "-", check: "red", icon: "tBody", label: "片体" },
  { level: 2, toggle: "+", check: "green", icon: "tSwept", label: "Swept (12)" },
  { level: 1, toggle: "-", check: "none", icon: "tBody", label: "片体" },
  { level: 2, toggle: "+", check: "green", icon: "tExtrude", label: "Extrude (5)", selected: true },
  { level: 1, toggle: "-", check: "red", icon: "tBody", label: "实体" },
  { level: 2, toggle: "+", check: "green", icon: "tExtrude", label: "Extrude (16)" },
  { level: 2, toggle: "+", check: "green", icon: "tShell", label: "Shell (15)" },
  { level: 2, toggle: "-", check: "green", icon: "tBlend", label: "Face Blend (14)" },
  { level: 3, toggle: "-", label: "第二组" },
  { level: 4, toggle: "-", label: "Add Tangent Faces" },
  { level: 5, icon: "tFace", label: "面" },
  { level: 3, toggle: "-", label: "第一组" },
  { level: 4, toggle: "-", label: "Add Tangent Faces" },
  { level: 5, icon: "tFace", label: "面" },
  { level: 3, toggle: "-", label: "脊线" },
  { level: 4, toggle: "-", icon: "tSection", label: "剖面" },
  { level: 5, check: "red", icon: "tEllipse", label: "椭圆" },
  { level: 3, toggle: "-", label: "相切线控制" },
  { level: 4, check: "none", icon: "tSpline", label: "样条" },
  { level: 2, toggle: "+", check: "green", icon: "tTrim", label: "Trim Body (13)" },
  { level: 2, toggle: "+", check: "green", icon: "tTrim", label: "Trim Body (6)" },
  { level: 2, toggle: "+", check: "green", icon: "tExtrude", label: "Extrude (0)" },
];

function continues(index: number, level: number) {
  for (let i = index + 1; i < rows.length; i++) {
    if (rows[i].level < level) return false;
    if (rows[i].level === level) return true;
  }
  return false;
}

function Check({ kind, label }: { kind: "none" | "green" | "red"; label: string }) {
  const box = kind === "green" ? "size-[11px] border-black" : "size-[9px] border-[#8a8a8a]";
  return (
    <span className="relative flex w-4 shrink-0 items-center justify-center">
      <input type="checkbox" aria-label={label} defaultChecked={kind !== "none"} className={`appearance-none border bg-white ${box}`} />
      {kind !== "none" && (
        <svg viewBox="0 0 14 12" className="pointer-events-none absolute top-0 left-0.5 h-3 w-3.5" aria-hidden="true">
          <path d="M2 5L5 9L12 1" fill="none" strokeWidth="2.500" stroke={kind === "green" ? "#20b84c" : "#c01828"} />
        </svg>
      )}
    </span>
  );
}

function Tree() {
  return (
    <ul className="min-h-0 flex-1 overflow-hidden bg-white text-xs leading-4">
      {rows.map((row, i) => (
        <li key={i} className="flex h-4 items-center">
          {Array.from({ length: row.level + 1 }, (_, k) => {
            const own = k === row.level;
            const below = continues(i, k);
            const above = own ? i > 0 : below;
            return (
              <span key={k} className="relative h-4 w-[19px] shrink-0">
                <span className={`block h-2 w-2.5 ${above ? "border-r border-dotted border-[#9a9a9a]" : ""}`} />
                <span className={`block h-2 w-2.5 ${below ? "border-r border-dotted border-[#9a9a9a]" : ""}`} />
                {own && <span className="absolute top-2 left-2.5 w-2 border-t border-dotted border-[#9a9a9a]" />}
                {own && row.toggle && (
                  <button type="button" aria-label={`Toggle ${row.label}`} className="absolute top-1 left-[5px] flex size-[9px] items-center justify-center border border-[#9a9a9a] bg-white">
                    <svg viewBox="0 0 5 5" className="size-[5px]"><path d={row.toggle === "+" ? "M0 2H5V3H0ZM2 0H3V5H2Z" : "M0 2H5V3H0Z"} fill="#000" /></svg>
                  </button>
                )}
              </span>
            );
          })}
          {row.check && <Check kind={row.check} label={row.label} />}
          {row.icon && <Icon name={row.icon} className="size-4" />}
          <span className={`flex h-4 flex-1 items-center pl-0.5 whitespace-nowrap ${row.selected ? "bg-[#316ac5] text-white" : ""}`}>
            <Mixed text={row.label} />
          </span>
        </li>
      ))}
    </ul>
  );
}

function ResourceBar() {
  const groups = [["assembly", "part"], ["web", "cap", "help"], ["clock", "palette", "wizard", "users"]];
  return (
    <aside className="flex w-[33px] shrink-0 flex-col gap-3 bg-linear-to-b from-[#9f9c8e] to-[#aeab9c] pt-3.5 pl-1.5">
      {groups.map((group, i) => (
        <div key={i} className="flex flex-col gap-px">
          {group.map((name) => (
            <button key={name} type="button" aria-label={name} className={`flex h-[41px] items-center justify-center border-b border-[#cfccbd] bg-linear-to-r from-[#f3f1ea] to-[#e4e0d0] ${name === "part" ? "border border-r-0 border-white bg-[#ece9d8]" : ""}`}>
              <Icon name={name} className="size-6" />
            </button>
          ))}
        </div>
      ))}
    </aside>
  );
}

function Navigator() {
  const arrow = "flex h-[15px] w-4 shrink-0 items-center justify-center rounded-sm border border-[#9db8ec] bg-[#c8d8fb]";
  return (
    <section className="flex w-[317px] shrink-0 flex-col border-x border-[#f7f5ec] bg-[#ece9d8] pt-px pr-[7px] pb-1 pl-2">
      <div className="flex h-[22px] shrink-0 items-center gap-1 pl-1 text-xs font-bold">
        <Icon name="pin" className="size-3" />部件导航器
      </div>
      <div className="flex h-4 shrink-0 items-center gap-4 border-t border-b border-t-white border-b-[#6f6d62] pl-1.5 text-xs leading-none">
        名称
        <svg viewBox="0 0 9 7" className="h-[7px] w-[9px]"><path d="M.5 6.500L5 .5" stroke="#aaa798" /><path d="M5 .5L8.500 6.500H.5" fill="none" stroke="#fff" /></svg>
      </div>
      <Tree />
      <div className="flex h-4 shrink-0 items-center bg-[#f4f3ee]">
        <button type="button" aria-label="Scroll left" className={arrow}><svg viewBox="0 0 8 8" className="size-2"><path d="M6 0L2 4L6 8" fill="none" stroke="#3c5078" strokeWidth="2" /></svg></button>
        <span className="mx-px flex h-[15px] basis-[144px] items-center justify-center gap-px rounded-sm border border-[#98b4ee] bg-linear-to-b from-[#cbdafc] to-[#b6cbf8]">
          {[0, 1, 2, 3].map((n) => <span key={n} className="h-1.5 w-px bg-[#8faae4]" />)}
        </span>
        <span className="flex-1" />
        <button type="button" aria-label="Scroll right" className={arrow}><svg viewBox="0 0 8 8" className="size-2"><path d="M2 0L6 4L2 8" fill="none" stroke="#3c5078" strokeWidth="2" /></svg></button>
      </div>
      <div className="flex h-2 shrink-0 items-center justify-center">
        <span className="h-[3px] flex-1 border-y border-[#b5b2a2]" />
        <span className="h-[7px] w-[60px] rounded-t-sm border border-[#b5b2a2] bg-[#f5f3ea]" />
        <span className="h-[3px] flex-1 border-y border-[#b5b2a2]" />
      </div>
      <div className="flex shrink-0 flex-col gap-1 bg-linear-to-b from-[#8da6e4] to-[#6a88d8] p-1 pr-1.5 pl-1.5">
        {["依附性", "细节", "预览"].map((t) => (
          <button key={t} type="button" className="h-[22px] rounded-t-sm bg-linear-to-r from-white from-50% to-[#c4d0f2] pl-[7px] text-left text-xs leading-none font-bold text-[#1c50b8]">{t}</button>
        ))}
      </div>
    </section>
  );
}

const marks =
  "M0 325L60 317L120 305L132 311L95 335L60 340L30 328ZM0 345L50 340L65 357L30 362L0 358ZM0 370L42 376L0 386ZM55 380L90 377L90 382ZM120 345L155 320L190 313L165 335L148 358L120 373L90 370ZM120 375L150 376L190 388L235 402L258 405L255 420L230 422L215 405L180 400L130 385ZM165 372L200 365L225 388L190 380ZM198 342L225 338L247 348L225 365L200 358ZM212 310L270 322L292 335L250 336L225 327ZM240 405L275 390L290 368L310 348L327 355L308 380L280 395L262 412L245 412ZM335 380L358 384L360 392L338 386ZM312 422L335 405L355 402L325 428ZM275 432L310 430L312 440L290 444ZM365 418L378 425L365 427ZM245 443L290 448L325 462L372 478L310 466L275 460ZM218 425L230 432L224 440ZM230 452L265 462L250 470L235 470ZM212 480L238 472L245 482L280 490L320 510L270 498L240 486ZM360 476L372 460L384 460L384 495L365 498L342 480ZM308 490L345 495L375 512L340 512ZM220 533L250 527L270 515L292 512L285 530L255 540ZM250 552L300 548L335 540L362 520L345 545L310 556L265 560ZM90 498L155 500L190 512L150 505ZM110 508L180 525L230 546L180 533L130 519ZM128 530L160 528L215 546L170 546ZM300 404L326 350L308 420ZM325 445L350 462L340 462Z";
const leftMarks =
  "M565 370L600 360L612 370L590 388L570 385ZM610 355L640 360L615 375ZM650 347L690 338L715 345L680 355ZM690 360L720 362L735 378L705 372ZM735 325L770 315L810 318L800 330L770 338L735 328ZM740 345L770 345L785 358L750 360ZM700 378L740 376L748 385L715 388ZM640 404L660 398L650 404ZM600 385L640 368L610 390ZM655 388L690 395L670 398ZM690 335L730 325L710 337ZM720 348L750 372L730 368Z";

function Viewport() {
  return (
    <main className="relative min-w-0 flex-1 overflow-hidden border-t border-l border-[#63788c] bg-linear-to-b from-[#91bbdd] via-[#c5d6e1] via-50% to-[#e5e5e5] to-80%">
      <svg viewBox="351 141 592 562" className="absolute inset-0 size-full" role="img" aria-label="Model">
        <defs>
          <linearGradient id="sheet" x1="0.300" y1="0" x2="0.600" y2="1">
            <stop offset="0" stopColor="#6598cb" /><stop offset=".35" stopColor="#72aff0" /><stop offset="1" stopColor="#82c8ff" />
          </linearGradient>
          <linearGradient id="body" x1="0" x2="1">
            <stop offset="0" stopColor="#3d2080" /><stop offset=".25" stopColor="#351b6a" /><stop offset=".6" stopColor="#2d1756" /><stop offset="1" stopColor="#48259c" />
          </linearGradient>
          <clipPath id="bodyClip">
            <path d="M532 428Q532 416 544 412C600 415 650 440 697 472Q740 487 775 487L772 501C768 513 738 525 690 527C630 527 560 512 545 488Z" />
          </clipPath>
          <filter id="soft"><feGaussianBlur stdDeviation="3.500" /></filter>
          <filter id="glow"><feGaussianBlur stdDeviation="2" /></filter>
        </defs>
        <g clipPath="url(#bodyClip)">
          <rect x="525" y="405" width="255" height="130" fill="url(#body)" />
          <path d="M528 424Q537 405 580 412L640 432L720 482L755 492L710 490C660 470 600 450 535 431Z" fill="#8246ff" filter="url(#soft)" />
          <path d="M585 435Q605 438 632 451Q612 449 585 435ZM655 456Q675 461 692 473Q674 470 655 456Z" fill="#e0b0ff" filter="url(#glow)" />
          <path d="M545 487C560 511 630 526 690 526C738 524 768 512 772 500" fill="none" stroke="#7046d8" strokeWidth="2" />
        </g>
        <path d="M653 301Q656 300 660 303C740 322 825 353 900 383C878 420 850 453 815 473C775 494 720 491 694 470L640 431L560 393C605 370 632 341 653 301Z" fill="url(#sheet)" />
        <g fill="#8040f4">
          <path d={marks} transform="translate(640 280) scale(.3333)" />
          <path d={leftMarks} transform="translate(400 280) scale(.3333)" />
        </g>
        <path d="M421 366C480 369 520 381 560 394C600 410 640 428 668 452L697 474C655 449 605 421 544 412L490 407C460 400 442 386 421 366Z" fill="#1e2d3a" />
      </svg>
    </main>
  );
}

function VTool({ name, drop = false }: { name: string; drop?: boolean }) {
  return (
    <div className="flex h-[31px] shrink-0 items-center justify-center">
      <span className={drop ? "w-2.5" : ""} />
      <button type="button" aria-label={name} className={name === "filter" ? "border-2 border-[#d83848] bg-[#fff4e8]" : ""}>
        <Icon name={name} className={name === "filter" ? "size-5" : "size-[26px]"} />
      </button>
      {drop && <button type="button" aria-label={`${name} options`} className="flex h-6 w-2.5 items-center justify-center"><Down /></button>}
    </div>
  );
}
function HHandle() {
  return <span className="mx-auto mt-[3px] mb-px h-0.5 w-[calc(100%-12px)] shrink-0 border-t-2 border-dotted border-[#aaa798]" />;
}

function SideBars() {
  const bar = "flex flex-col border-b border-[#cfcbbb] bg-linear-to-r from-[#f7f7f4] to-[#ebe8da]";
  const line = "mx-1 my-[3px] h-px shrink-0 bg-[#cfcbbb]";
  return (
    <aside className="flex shrink-0">
      <div className="flex w-[47px] flex-col border-l border-white bg-[#ece9d8] pt-px">
        <div className={bar}>
          <HHandle />
          {["vLine", "vArc", "vCircLine", "vWave", "vPoints"].map((n) => <VTool key={n} name={n} />)}
          <span className={line} />
          {["vOffset", "vPoly", "vBridge", "vProject", "vSheet"].map((n) => <VTool key={n} name={n} drop={n === "vPoly" || n === "vSheet"} />)}
          <div className="flex h-8 items-end justify-between px-[7px] pb-[3px]">
            <Left />
            <svg viewBox="0 0 5 8" className="h-2 w-[5px]"><path d="M0 .5L2.500 3L5 .5M0 4.500L2.500 7L5 4.500" stroke="#000" fill="none" strokeWidth="1.300" /></svg>
          </div>
        </div>
        <div className={`${bar} flex-1 border-t border-t-white`}>
          <HHandle />
          {["vEdit", "vTrim", "vCorner", "vDivide", "vLength", "vSmooth"].map((n) => <VTool key={n} name={n} />)}
          <div className="px-[7px] pt-0.5"><Left /></div>
        </div>
      </div>
      <div className="flex w-[34px] flex-col border-l border-[#cfcbbb] bg-[#ece9d8] pt-px">
        <div className={bar}>
          <HHandle />
          <VTool name="filter" />
          <div className="flex h-2 items-center pl-3.5"><Left /></div>
          <span className={line} />
          <VTool name="gear" />
          <div className="flex h-3.5 items-start pl-1"><Left /></div>
        </div>
        <div className={`${bar} border-t border-t-white`}>
          <HHandle />
          {["gLine", "gMid", "gSpline", "gInter", "gCenter", "gQuad", "gPlus"].map((n) => <VTool key={n} name={n} />)}
          <div className="flex h-3.5 items-center pl-1"><Left /></div>
        </div>
      </div>
    </aside>
  );
}

function TaskBar() {
  const tasks: [string, string][] = [["folder", "4 Win..."], ["ug", "UG NX..."], ["nx", "波波碌..."], ["firefox", "[033]..."], ["acad", "AutoCA..."], ["eye", "新建 A..."]];
  return (
    <footer className="flex h-[30px] shrink-0 items-center bg-linear-to-b from-[#3c80f0] via-[#245ddb] via-20% to-[#1c48b8] text-xs text-white">
      <button type="button" className="flex h-full w-[97px] shrink-0 items-center gap-1 rounded-r-xl bg-linear-to-b from-[#5eac56] via-[#388a36] via-30% to-[#2c7a2c] pl-2 shadow-[inset_-3px_0_4px_#1c5c1c]">
        <Icon name="flag" className="size-6" />
        <span className="text-lg leading-none italic [text-shadow:1px_1px_1px_#1c4c1c]">开始</span>
      </button>
      <div className="flex w-[102px] shrink-0 items-center gap-1 pl-2.5">
        {["qDesk", "qMail", "qIe"].map((n) => <button key={n} type="button" aria-label={n}><Icon name={n} className="size-5" /></button>)}
        <button type="button" aria-label="More shortcuts" className="-mt-2 ml-1 text-sm leading-none">»</button>
      </div>
      <div className="flex min-w-0 flex-1 gap-0.5">
        {tasks.map(([icon, label]) => (
          <button key={label} type="button" className={`flex h-[25px] min-w-0 basis-[100px] items-center gap-1.5 rounded-sm pl-2 ${icon === "nx" ? "bg-[#1e4fb4] shadow-[inset_1px_1px_2px_#10307c]" : "bg-linear-to-b from-[#5a96fa] via-[#3b7cf2] via-20% to-[#3674ea]"}`}>
            <Icon name={icon} className="size-4" />
            <span className="flex-1 truncate text-left"><Mixed text={label} /></span>
            {icon === "folder" && <svg viewBox="0 0 5 3" className="mr-1 h-[3px] w-[5px]"><path d="M0 0H5L2.500 3Z" fill="#fff" /></svg>}
          </button>
        ))}
      </div>
      <button type="button" aria-label="Restore band" className="mr-4 flex flex-col items-center gap-1.5">
        <svg viewBox="0 0 10 9" className="h-2 w-2.5"><path d="M3 3V1H9V5H7M1 4H7V8H1Z" fill="none" stroke="#fff" strokeWidth="1.200" /></svg>
        <svg viewBox="0 0 5 3" className="h-[3px] w-[5px]"><path d="M0 0H5L2.500 3Z" fill="#fff" /></svg>
      </button>
      <div className="flex h-full w-[130px] shrink-0 items-center gap-0.5 border-l border-[#0a3a90] bg-linear-to-b from-[#2cb0f4] via-[#1290ea] via-20% to-[#0f80d8] pl-2">
        {["net", "volume", "kav", "shield"].map((n) => <Icon key={n} name={n} className="size-4" />)}
        <time className={`${latin} ml-2`}>13:01</time>
      </div>
    </footer>
  );
}

function Gradients() {
  const list: [string, string, string][] = [
    ["blue", "#78c8f8", "#2458c0"], ["paleBlue", "#f0f8ff", "#6490dc"], ["paper", "#ffffff", "#d4dcfa"],
    ["globe", "#48a8e0", "#185890"], ["redCone", "#ff5848", "#b81818"], ["steel", "#eef2ff", "#5068a8"], ["orange", "#ffd860", "#f08818"],
  ];
  return (
    <svg className="absolute size-0" aria-hidden="true">
      <defs>
        {list.map(([id, a, b]) => (
          <linearGradient key={id} id={id} x1="0" y1="0" x2="1" y2="1"><stop offset="0" stopColor={a} /><stop offset="1" stopColor={b} /></linearGradient>
        ))}
      </defs>
    </svg>
  );
}

export default function App() {
  return (
    <div className="flex h-screen flex-col overflow-hidden bg-[#ece9d8] font-['Liberation_Sans','Noto_Sans_CJK_SC',sans-serif] text-black">
      <Gradients />
      <TitleBar />
      <MenuBar />
      <div className="flex h-[34px] shrink-0 border-b border-white">
        <Group start grow more items="newDoc open save | cut copy paste | undo" />
        <Group items="fit fitGray zoomWin zoom rotate pan | cube v clip v" />
        <Group items="csysPick csysGrid csys csysRot csysMove csysTool swapA swapB spread" />
        <Group items="measure angle" />
      </div>
      <div className="flex h-[35px] shrink-0 border-b-2 border-[#aca899]">
        <Group more items="sketch | extrude revolve sweep bent tube | emboss" />
        <Group grow more items="unite v cubeLines v | pyramid poly | blend faceBlend shell thread split hole pad" />
        <Group items="surf0 surf1 surf2 surfCurves surfGrid surfTrim | extend offsetSurf | thicken corner" />
      </div>
      <div className="flex h-[22px] shrink-0 border-b-2 border-[#8f8c80] bg-linear-to-b from-[#efecdf] to-[#e8e5d4] py-0.5">
        <span className="flex-1 border-r border-[#c9c5b6]" />
        <span className="flex-1 border-r border-[#c9c5b6]" />
        <span className="w-5 border-r border-[#c9c5b6]" />
        <span className="w-[38px]" />
      </div>
      <div className="flex min-h-0 flex-1">
        <ResourceBar />
        <Navigator />
        <Viewport />
        <SideBars />
      </div>
      <div className="flex h-[35px] shrink-0 border-t border-white">
        <Group items="netTool netSurf | sheetAxis" />
        <Group items="chain | line lineAxes parallel cross tangent tangent2 frame | arc3 arcTan arcLines arcRad | circ3 circTan circLines circRad | circCenter circArrow circTanC" />
        <Group items="dimension blocks" />
      </div>
      <TaskBar />
    </div>
  );
}
